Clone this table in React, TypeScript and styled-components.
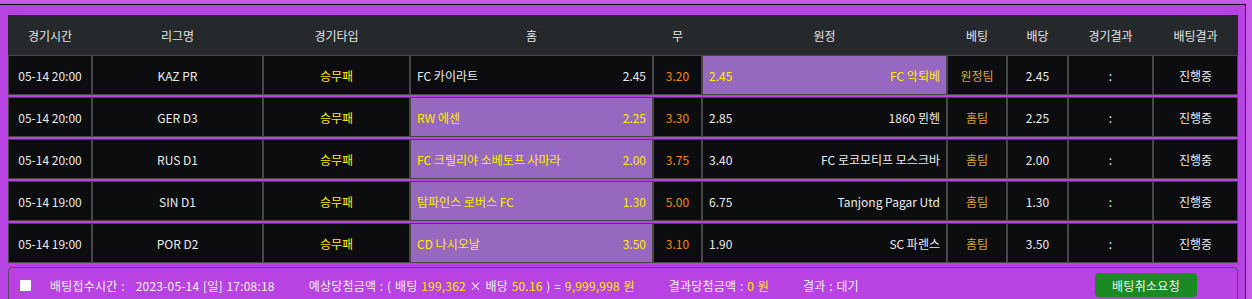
import React from "react";
import styled, { createGlobalStyle } from "styled-components";

const Global = createGlobalStyle`
  html, body { margin: 0; padding: 0; }
  body {
    background: #c85ae8;
    font-family: "Noto Sans CJK KR", "Noto Sans", sans-serif;
    font-size: 12px;
    color: #e6e6e6;
    overflow: hidden;
  }
`;

const Page = styled.div`
  padding-top: 4px;
`;

const Frame = styled.div`
  width: 1230px;
  border-top: 1px solid #111;
  border-right: 1px solid #111;
  background: #b842e2;
  padding: 10px 7px 40px 8px;
  min-height: 300px;
`;

const COLS = "84px 171px 147px 243px 49px 245px 60px 61px 85px 85px";

const HeaderRow = styled.div`
  display: grid;
  grid-template-columns: ${COLS};
  height: 40px;
  background: #25292c;
`;

const HeadCell = styled.div`
  display: flex;
  align-items: center;
  justify-content: center;
  color: #e4e4e4;
`;

const Row = styled.div`
  display: grid;
  grid-template-columns: ${COLS};
  height: 40px;
  & + & {
    margin-top: 2px;
  }
`;

type Tone = "white" | "yellow" | "orange" | "gold";
const toneColor: Record<Tone, string> = {
  white: "#ececec",
  yellow: "#ffec00",
  orange: "#f08a10",
  gold: "#d8a43c",
};

const Cell = styled.div<{ $tone?: Tone; $picked?: boolean; $align?: string }>`
  display: flex;
  align-items: center;
  justify-content: ${(p) => p.$align || "center"};
  border: 1px solid #474747;
  background: ${(p) => (p.$picked ? "#9668bf" : "#0c0d0f")};
  color: ${(p) => toneColor[p.$tone || (p.$picked ? "yellow" : "white")]};
  padding: 0 6px;
  white-space: nowrap;
  overflow: hidden;
`;

const Footer = styled.div`
  margin-top: 4px;
  height: 40px;
  border: 1px solid #5c4470;
  border-radius: 4px;
  display: flex;
  align-items: flex-start;
  padding: 5px 0 0 10px;
  color: #f0f0f0;
`;

const FooterInner = styled.div`
  display: flex;
  align-items: center;
  height: 24px;
  flex: 1;
`;

const Check = styled.span`
  width: 11px;
  height: 11px;
  background: #fff;
  border: 1px solid #777;
  border-radius: 2px;
  margin-right: 18px;
`;

const Item = styled.span<{ $gap?: number }>`
  margin-right: ${(p) => p.$gap ?? 34}px;
  white-space: pre;
  letter-spacing: 0.2px;
  word-spacing: 0.8px;
`;

const Y = styled.span`
  color: #ffec00;
`;

const CancelBtn = styled.button`
  margin-left: auto;
  margin-right: 40px;
  height: 24px;
  width: 102px;
  border: none;
  border-radius: 4px;
  background: #1b8a22;
  color: #f4f4f4;
  font-family: inherit;
  font-size: 12px;
  letter-spacing: 0.3px;
  cursor: pointer;
`;

type Game = {
  time: string;
  league: string;
  home: string;
  homeOdd: string;
  draw: string;
  awayOdd: string;
  away: string;
  pick: "home" | "away";
};

const games: Game[] = [
  { time: "05-14 20:00", league: "KAZ PR", home: "FC 카이라트", homeOdd: "2.45", draw: "3.20", awayOdd: "2.45", away: "FC 악퇴베", pick: "away" },
  { time: "05-14 20:00", league: "GER D3", home: "RW 에센", homeOdd: "2.25", draw: "3.30", awayOdd: "2.85", away: "1860 뮌헨", pick: "home" },
  { time: "05-14 20:00", league: "RUS D1", home: "FC 크릴리야 소베토프 사마라", homeOdd: "2.00", draw: "3.75", awayOdd: "3.40", away: "FC 로코모티프 모스크바", pick: "home" },
  { time: "05-14 19:00", league: "SIN D1", home: "탐파인스 로버스 FC", homeOdd: "1.30", draw: "5.00", awayOdd: "6.75", away: "Tanjong Pagar Utd", pick: "home" },
  { time: "05-14 19:00", league: "POR D2", home: "CD 나시오날", homeOdd: "3.50", draw: "3.10", awayOdd: "1.90", away: "SC 파렌스", pick: "home" },
];

const headers = ["경기시간", "리그명", "경기타입", "홈", "무", "원정", "베팅", "배당", "경기결과", "배팅결과"];

export default function App() {
  return (
    <>
      <Global />
      <Page>
        <Frame>
          <HeaderRow>
            {headers.map((h) => (
              <HeadCell key={h}>{h}</HeadCell>
            ))}
          </HeaderRow>
          {games.map((g, i) => {
            const homePicked = g.pick === "home";
            return (
              <Row key={i}>
                <Cell>{g.time}</Cell>
                <Cell>{g.league}</Cell>
                <Cell $tone="yellow">승무패</Cell>
                <Cell $picked={homePicked} $align="space-between">
                  <span>{g.home}</span>
                  <span>{g.homeOdd}</span>
                </Cell>
                <Cell $tone="orange">{g.draw}</Cell>
                <Cell $picked={!homePicked} $align="space-between">
                  <span>{g.awayOdd}</span>
                  <span>{g.away}</span>
                </Cell>
                <Cell $tone="gold">{homePicked ? "홈팀" : "원정팀"}</Cell>
                <Cell>{homePicked ? g.homeOdd : g.awayOdd}</Cell>
                <Cell>:</Cell>
                <Cell>진행중</Cell>
              </Row>
            );
          })}
          <Footer>
            <FooterInner>
              <Check />
              <Item>{"배팅접수시간 :   2023-05-14 [일] 17:08:18"}</Item>
              <Item>
                {"예상당첨금액 : ( 배팅 "}
                <Y>199,362</Y>
                {" × 배당 "}
                <Y>50.16</Y>
                {" ) = "}
                <Y>9,999,998 원</Y>
              </Item>
              <Item>
                {"결과당첨금액 : "}
                <Y>0 원</Y>
              </Item>
              <Item>{"결과 : 대기"}</Item>
              <CancelBtn>배팅취소요청</CancelBtn>
            </FooterInner>
          </Footer>
        </Frame>
      </Page>
    </>
  );
}
